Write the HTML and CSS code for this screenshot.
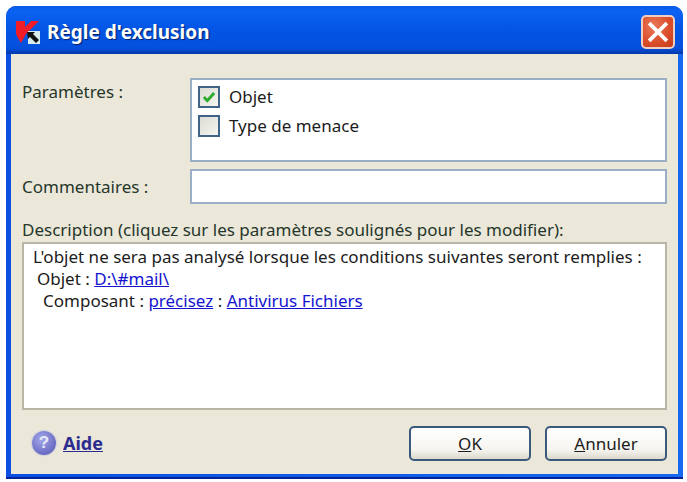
FILE: index.html
```html
<!DOCTYPE html>
<html lang="fr">

<head>
    <meta charset="UTF-8">
    <title>Règle d'exclusion</title>
    <link rel="stylesheet" href="styles.css">
</head>

<body>
    <div class="window">
        <!-- Title bar -->
        <header class="titlebar">
            <div class="title-left">
                <svg class="app-icon" viewBox="0 0 24 24" width="24" height="24">
                    <path fill="#f01c28" d="M0 1H9V7L15 1H23L14 10 10 14 5 23 3 20 0 14Z"/>
                    <path fill="#d8ecec" d="M12 11H24V24H12Z"/>
                    <path fill="#111" d="M11 12H19L17 14 23 20 20 23 14 17 12 19Z"/>
                </svg>
                <h1 class="title">Règle d'exclusion</h1>
            </div>
            <button class="close-btn">
                <svg viewBox="0 0 24 24" width="26" height="26">
                    <path d="M5 5l14 14M19 5L5 19" stroke="#fff" stroke-width="3.4" stroke-linecap="square" fill="none"/>
                </svg>
            </button>
        </header>

        <!-- Dialog body -->
        <main class="content">
            <div class="form-row">
                <label class="row-label label-top">Paramètres :</label>
                <div class="params-box">
                    <div class="check-row">
                        <span class="check checked">
                            <svg viewBox="0 0 14 14" width="16" height="16">
                                <path d="M2.5 7l3 3.2L11.5 3.5" stroke="#2cab2c" stroke-width="2.6" fill="none"/>
                            </svg>
                        </span>
                        <span>Objet</span>
                    </div>
                    <div class="check-row">
                        <span class="check"></span>
                        <span>Type de menace</span>
                    </div>
                </div>
            </div>

            <div class="form-row comment-row">
                <label class="row-label">Commentaires :</label>
                <input class="comment-input" type="text">
            </div>

            <p class="desc-label">Description (cliquez sur les paramètres soulignés pour les modifier):</p>
            <div class="desc-box">
                <p>L'objet ne sera pas analysé lorsque les conditions suivantes seront remplies :</p>
                <p class="indent-1">Objet : <a href="#">D:\#mail\</a></p>
                <p class="indent-2">Composant : <a href="#">précisez</a> : <a href="#">Antivirus Fichiers</a></p>
            </div>

            <footer class="actions">
                <a class="help" href="#">
                    <span class="help-icon">?</span>
                    <span class="help-text">Aide</span>
                </a>
                <div class="buttons">
                    <button class="btn"><u>O</u>K</button>
                    <button class="btn"><u>A</u>nnuler</button>
                </div>
            </footer>
        </main>
    </div>
</body>

</html>
```

FILE: styles.css
```css
* {
    box-sizing: border-box;
}

html, body {
    margin: 0;
    height: 100%;
    background: #fff;
}

body {
    padding: 6px 4px 3px 6px;
    font-family: "Noto Sans", "DejaVu Sans", sans-serif;
    font-size: 17px;
    color: #1c1c1c;
    overflow: hidden;
}

p {
    margin: 0;
}

.window {
    height: 100%;
    display: flex;
    flex-direction: column;
    border-radius: 10px 10px 0 0;
    background: linear-gradient(90deg, #0a4fe0 0%, #1668f0 100%);
    box-shadow: inset 0 -2px 0 #03239a;
    overflow: hidden;
}

.titlebar {
    height: 48px;
    flex: none;
    display: flex;
    align-items: center;
    justify-content: space-between;
    padding: 3px 8px 0 10px;
    background: linear-gradient(180deg, #0a5ae8 0%, #0b62f2 10%, #0355e4 50%, #0450dc 88%, #0439a8 100%);
}

.title-left {
    display: flex;
    align-items: center;
    gap: 7px;
}

.title {
    margin: 0;
    font-family: "Noto Sans", sans-serif;
    font-size: 19px;
    font-weight: bold;
    color: #fff;
    text-shadow: 1px 1px 1px #02206e;
}

.close-btn {
    width: 34px;
    height: 34px;
    padding: 0;
    display: flex;
    align-items: center;
    justify-content: center;
    border: 2px solid #f0cfc0;
    border-radius: 5px;
    background: radial-gradient(circle at 35% 30%, #e8795a 0%, #dc4f2c 55%, #c23a1a 100%);
}

.content {
    flex: 1;
    margin: 0 5px 5px;
    padding: 24px 11px 0;
    display: flex;
    flex-direction: column;
    background: #ebe8da;
}

.form-row {
    display: flex;
}

.row-label {
    width: 168px;
    flex: none;
    line-height: 20px;
    color: #26362a;
}

.label-top {
    padding-top: 4px;
}

.params-box {
    flex: 1;
    height: 84px;
    padding: 2px 6px;
    background: #fff;
    border: 2px solid #9aaec6;
}

.check-row {
    display: flex;
    align-items: center;
    gap: 9px;
    height: 29px;
    line-height: 20px;
}

.check {
    width: 22px;
    height: 22px;
    display: flex;
    align-items: center;
    justify-content: center;
    border: 2px solid #3f6488;
    background: linear-gradient(135deg, #dcdcd4 0%, #f6f6f2 100%);
}

.comment-row {
    margin-top: 7px;
    align-items: center;
}

.comment-input {
    flex: 1;
    height: 35px;
    border: 2px solid #9aaec6;
    background: #fff;
    outline: none;
}

.desc-label {
    margin-top: 16px;
    line-height: 20px;
    color: #26362a;
}

.desc-box {
    height: 168px;
    margin-top: 2px;
    padding: 2px 9px;
    background: #fff;
    border: 2px solid #b8b6a4;
    line-height: 22px;
}

.indent-1 {
    padding-left: 4px;
}

.indent-2 {
    padding-left: 10px;
}

.desc-box a {
    color: #1414d0;
    text-decoration: underline;
}

.actions {
    flex: 1;
    display: flex;
    align-items: center;
    justify-content: space-between;
    padding: 2px 0 0 10px;
}

.help {
    display: flex;
    align-items: center;
    gap: 7px;
    color: #2c2c90;
    text-decoration: none;
}

.help-icon {
    width: 24px;
    height: 24px;
    border-radius: 50%;
    display: flex;
    align-items: center;
    justify-content: center;
    font-family: "Liberation Sans", sans-serif;
    font-size: 17px;
    font-weight: bold;
    color: #e8e8f8;
    background: radial-gradient(circle at 40% 35%, #a4a8e8 0%, #6a6cc4 70%, #5a5cb0 100%);
    box-shadow: 0 0 1px 1px #d0d0dc;
}

.help-text {
    font-size: 18px;
    font-weight: bold;
    text-decoration: underline;
}

.buttons {
    display: flex;
    gap: 14px;
}

.btn {
    width: 122px;
    height: 35px;
    padding: 0;
    font-family: inherit;
    font-size: 17px;
    color: #1c1c1c;
    border: 2px solid #3a5a7c;
    border-radius: 5px;
    background: linear-gradient(180deg, #ffffff 0%, #f6f5f0 70%, #dcd8cc 100%);
}
```
